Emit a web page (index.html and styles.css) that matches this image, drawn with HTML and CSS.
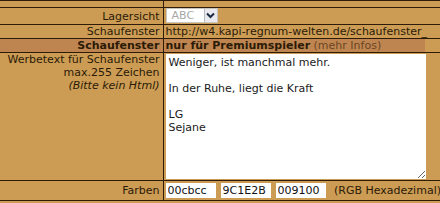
FILE: index.html
```html
<!DOCTYPE html>
<html lang="de">

<head>
    <meta charset="UTF-8">
    <title>Schaufenster</title>
    <link rel="stylesheet" href="styles.css">
</head>

<body>
    <table class="form">
        <colgroup>
            <col class="col-label">
            <col class="col-field">
            <col>
        </colgroup>
        <tr class="spacer">
            <td></td>
            <td colspan="2"></td>
        </tr>
        <tr class="row">
            <td class="label">Lagersicht</td>
            <td colspan="2">
                <div class="select">
                    <span class="select-text">ABC</span>
                    <span class="select-btn">
                        <svg width="9" height="7" viewBox="0 0 9 7">
                            <path d="M1 1.5 L4.5 5 L8 1.5" fill="none" stroke="#1c2a44" stroke-width="2"/>
                        </svg>
                    </span>
                </div>
            </td>
        </tr>
        <tr class="row">
            <td class="label">Schaufenster</td>
            <td colspan="2" class="url">http://w4.kapi-regnum-welten.de/schaufenster_</td>
        </tr>
        <tr class="row head">
            <td class="label"><b>Schaufenster</b></td>
            <td class="head-main"><b>nur für Premiumspieler</b> <span class="more">(mehr Infos)</span></td>
            <td class="head-end"></td>
        </tr>
        <tr class="text-row">
            <td class="label">Werbetext für Schaufenster<br>max.255 Zeichen<br><i>(Bitte kein Html)</i></td>
            <td colspan="2"><textarea class="ad-text">Weniger, ist manchmal mehr.

In der Ruhe, liegt die Kraft

LG
Sejane</textarea></td>
        </tr>
        <tr class="color-row">
            <td class="label">Farben</td>
            <td colspan="2">
                <input class="hex" type="text" value="00cbcc"><input class="hex" type="text" value="9C1E2B"><input class="hex" type="text" value="009100"> (RGB Hexadezimal)
            </td>
        </tr>
    </table>
</body>

</html>
```

FILE: styles.css
```css
body {
    margin: 0;
    background: #cc9c55;
    color: #2a1a06;
    font: 11px/13px "DejaVu Sans", sans-serif;
    overflow: hidden;
}

.form {
    width: 100%;
    border-collapse: collapse;
    table-layout: fixed;
}

.col-label {
    width: 163px;
}

.col-field {
    width: 262px;
}

.form td {
    border: 1px solid #2e1c08;
    padding: 0 2px;
    vertical-align: middle;
    white-space: nowrap;
}

.form td:first-child {
    border-left: none;
}

.form td:last-child {
    border-right: none;
}

.form .label {
    text-align: right;
    padding-right: 3px;
}

.spacer td {
    height: 6px;
    padding: 0;
}

.row td {
    height: 13px;
}

.url {
    overflow: visible;
}

.head .head-main {
    background: #bf8550;
    border-right: none;
}

.head .head-end {
    border-left: none;
}

.head .label {
    background: #bf8550;
}

.more {
    color: #6b4525;
}

.select {
    display: flex;
    align-items: center;
    width: 52px;
    height: 15px;
    margin: 0 0 1px;
    background: #fff;
    border: 1px solid #c8c4bc;
    box-sizing: border-box;
}

.select-text {
    flex: 1;
    padding-left: 5px;
    color: #a8a8a8;
    font-size: 11px;
    line-height: 12px;
}

.select-btn {
    display: flex;
    align-items: center;
    justify-content: center;
    width: 12px;
    height: 13px;
    background: #e9e9ee;
    border-left: 1px solid #b8b8c0;
}

.text-row td {
    vertical-align: top;
}

.ad-text {
    display: block;
    width: 260px;
    height: 125px;
    margin: 1px 0 1px 0;
    padding: 2px 3px;
    border: none;
    box-sizing: border-box;
    background: #fff;
    color: #1a1a1a;
    font: 11px/13px "DejaVu Sans", sans-serif;
}

.color-row td {
    height: 19px;
}

.hex {
    width: 50px;
    height: 15px;
    margin: 0 5px 0 0;
    padding: 0 2px;
    border: none;
    box-sizing: border-box;
    background: #fff;
    color: #111;
    font: 11px "DejaVu Sans", sans-serif;
    vertical-align: middle;
}
```
